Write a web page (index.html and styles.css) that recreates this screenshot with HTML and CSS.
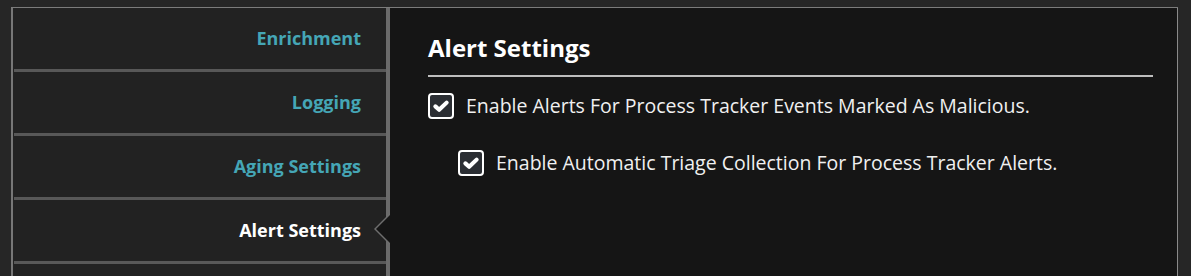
FILE: index.html
```html
<!DOCTYPE html>
<html>
<head>
<meta charset="utf-8">
<link rel="stylesheet" href="styles.css">
</head>
<body>
<div class="frame">
  <nav class="sidebar">
    <div class="nav-item">Enrichment</div>
    <div class="nav-item">Logging</div>
    <div class="nav-item">Aging Settings</div>
    <div class="nav-item active">Alert Settings</div>
    <div class="nav-item"></div>
  </nav>
  <main class="panel">
    <h2 class="title">Alert Settings</h2>
    <label class="option">
      <span class="box"><svg viewBox="0 0 24 24" width="18" height="18"><path d="M4.5 12.5 L9.5 17 L19.5 7.5" fill="none" stroke="#fff" stroke-width="5.5" stroke-linecap="round" stroke-linejoin="round"/></svg></span>
      <span class="label">Enable Alerts For Process Tracker Events Marked As Malicious.</span>
    </label>
    <label class="option sub">
      <span class="box"><svg viewBox="0 0 24 24" width="18" height="18"><path d="M4.5 12.5 L9.5 17 L19.5 7.5" fill="none" stroke="#fff" stroke-width="5.5" stroke-linecap="round" stroke-linejoin="round"/></svg></span>
      <span class="label">Enable Automatic Triage Collection For Process Tracker Alerts.</span>
    </label>
  </main>
</div>
</body>
</html>
```
FILE: styles.css
```css
html, body {
  margin: 0;
  padding: 0;
  background: #262626;
  font-family: "Open Sans", "Liberation Sans", sans-serif;
  height: 276px;
  overflow: hidden;
}
.frame {
  display: flex;
  margin: 7px 0 0 11px;
  width: 1167px;
  border-top: 1px solid #7c7c7c;
  height: 268px;
  overflow: hidden;
}
.sidebar {
  width: 373px;
  background: #222;
  border-left: 2px solid #777;
  display: flex;
  flex-direction: column;
  flex-shrink: 0;
}
.nav-item {
  height: 61px;
  border-bottom: 3px solid #585858;
  margin-left: 1px;
  display: flex;
  align-items: center;
  justify-content: flex-end;
  padding: 0 25px 2px 0;
  box-sizing: border-box;
  height: 64px;
  font-weight: 700;
  font-size: 18px;
  color: #45a6b6;
  position: relative;
  flex-shrink: 0;
}
.nav-item.active {
  color: #fff;
}
.nav-item.active::after {
  content: "";
  position: absolute;
  right: -4px;
  top: 15px;
  width: 14px;
  height: 28px;
  background: #151515;
  clip-path: polygon(100% 0, 0 50%, 100% 100%);
}
.nav-item.active::before {
  content: "";
  position: absolute;
  right: -4px;
  top: 13px;
  width: 16px;
  height: 32px;
  background: #6e6e6e;
  clip-path: polygon(100% 0, 0 50%, 100% 100%);
}
.panel {
  flex: 1;
  background: #151515;
  border-left: 4px solid #6b6b6b;
  border-right: 1px solid #8a8a8a;
  padding: 0 24px 0 38px;
}
.title {
  margin: 0;
  padding-top: 25px;
  padding-bottom: 12px;
  font-size: 24px;
  font-weight: 700;
  color: #fff;
  border-bottom: 2px solid #bdbdbd;
  line-height: 30px;
}
.option {
  display: flex;
  align-items: center;
  gap: 12px;
  margin-top: 16px;
  color: #f0f0f0;
  font-size: 19.5px;
}
.option.sub {
  margin-left: 30px;
  margin-top: 31px;
}
.box {
  width: 22px;
  height: 22px;
  border: 2px solid #fff;
  border-radius: 4px;
  background: #2b2e33;
  display: flex;
  align-items: center;
  justify-content: center;
  flex-shrink: 0;
}
.label {
  line-height: 26px;
}
```
